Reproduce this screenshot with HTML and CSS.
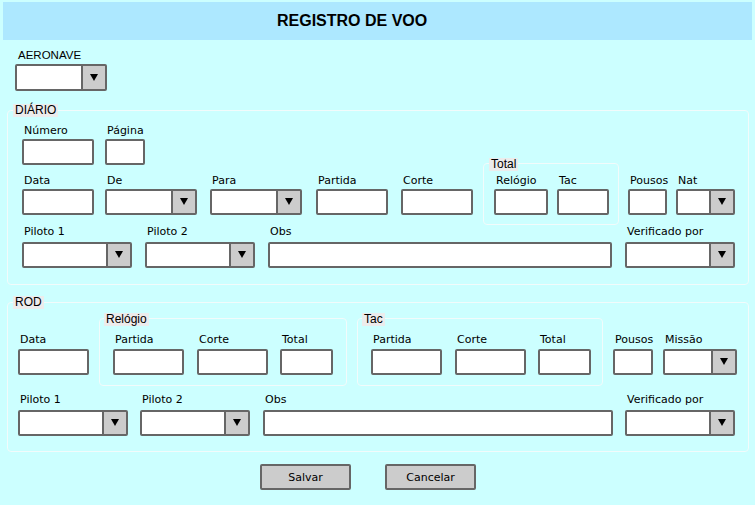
FILE: index.html
```html
<!DOCTYPE html>
<html lang="pt">
<head>
<meta charset="utf-8">
<title>Registro de Voo</title>
<link rel="stylesheet" href="styles.css">
</head>
<body>
<div class="hdr">REGISTRO DE VOO</div>

<div class="aero">
  <div class="fld w92">
    <span class="lb lb-caps">AERONAVE</span>
    <div class="sel tall"><span class="dd"></span></div>
  </div>
</div>

<section class="grp outer diario">
  <div class="lgd">DIÁRIO</div>
  <div class="row d1">
    <div class="fld w72"><span class="lb">Número</span><div class="inp"></div></div>
    <div class="fld w40 ml11"><span class="lb">Página</span><div class="inp"></div></div>
  </div>
  <div class="row d2">
    <div class="fld w72"><span class="lb">Data</span><div class="inp"></div></div>
    <div class="fld w92 ml11"><span class="lb">De</span><div class="sel"><span class="dd"></span></div></div>
    <div class="fld w92 ml13"><span class="lb">Para</span><div class="sel"><span class="dd"></span></div></div>
    <div class="fld w72 ml14"><span class="lb">Partida</span><div class="inp"></div></div>
    <div class="fld w72 ml13"><span class="lb">Corte</span><div class="inp"></div></div>
    <div class="grp inner total ml10">
      <div class="lgd">Total</div>
      <div class="row">
        <div class="fld w54"><span class="lb">Relógio</span><div class="inp"></div></div>
        <div class="fld w52 ml9"><span class="lb">Tac</span><div class="inp"></div></div>
      </div>
    </div>
    <div class="fld w39 ml9"><span class="lb">Pousos</span><div class="inp"></div></div>
    <div class="fld w59 ml9"><span class="lb">Nat</span><div class="sel"><span class="dd"></span></div></div>
  </div>
  <div class="row d3">
    <div class="fld w110"><span class="lb">Piloto 1</span><div class="sel"><span class="dd"></span></div></div>
    <div class="fld w110 ml13"><span class="lb">Piloto 2</span><div class="sel"><span class="dd"></span></div></div>
    <div class="fld w344 ml13"><span class="lb">Obs</span><div class="inp"></div></div>
    <div class="fld w110 ml13"><span class="lb">Verificado por</span><div class="sel"><span class="dd"></span></div></div>
  </div>
</section>

<section class="grp outer rod">
  <div class="lgd">ROD</div>
  <div class="row ra">
    <div class="fld w71"><span class="lb">Data</span><div class="inp"></div></div>
    <div class="grp inner clock ml10">
      <div class="lgd">Relógio</div>
      <div class="row">
        <div class="fld w71"><span class="lb">Partida</span><div class="inp"></div></div>
        <div class="fld w71 ml13"><span class="lb">Corte</span><div class="inp"></div></div>
        <div class="fld w53 ml12"><span class="lb">Total</span><div class="inp"></div></div>
      </div>
    </div>
    <div class="grp inner tac ml10">
      <div class="lgd">Tac</div>
      <div class="row">
        <div class="fld w71"><span class="lb">Partida</span><div class="inp"></div></div>
        <div class="fld w71 ml13"><span class="lb">Corte</span><div class="inp"></div></div>
        <div class="fld w53 ml12"><span class="lb">Total</span><div class="inp"></div></div>
      </div>
    </div>
    <div class="fld w40 ml10"><span class="lb">Pousos</span><div class="inp"></div></div>
    <div class="fld w74 ml10"><span class="lb">Missão</span><div class="sel"><span class="dd"></span></div></div>
  </div>
  <div class="row rb">
    <div class="fld w110"><span class="lb">Piloto 1</span><div class="sel"><span class="dd"></span></div></div>
    <div class="fld w110 ml12"><span class="lb">Piloto 2</span><div class="sel"><span class="dd"></span></div></div>
    <div class="fld w350 ml13"><span class="lb">Obs</span><div class="inp"></div></div>
    <div class="fld w110 ml12"><span class="lb">Verificado por</span><div class="sel"><span class="dd"></span></div></div>
  </div>
</section>

<div class="actions">
  <button class="act" type="button">Salvar</button>
  <button class="act" type="button">Cancelar</button>
</div>
</body>
</html>
```

FILE: styles.css
```css
html, body {
  margin: 0;
  background: #ccffff;
}
body {
  padding: 2px 0 0;
  width: 755px;
  height: 503px;
  overflow: hidden;
  font-family: "DejaVu Sans", sans-serif;
  font-size: 11px;
  color: #000;
}

.hdr {
  margin: 0 3px;
  height: 38px;
  line-height: 38px;
  background: #ade8ff;
  padding-left: 274px;
  font-family: "Liberation Sans", Arial, sans-serif;
  font-weight: bold;
  font-size: 16px;
  color: #000;
}

.aero {
  margin: 8px 0 0 15px;
}

/* fields */
.fld {
  display: flex;
  flex-direction: column;
  flex: none;
}
.lb {
  display: block;
  height: 14px;
  line-height: 14px;
  padding-left: 2px;
  white-space: nowrap;
  margin-bottom: 1px;
}
.lb-caps {
  font-family: "Liberation Sans", Arial, sans-serif;
  font-size: 11.5px;
  padding-left: 3px;
  margin-bottom: 2px;
}

.inp,
.sel {
  box-sizing: border-box;
  height: 26px;
  border: 2px solid #666;
  border-radius: 2px;
  background: #fff;
}
.sel {
  display: flex;
  justify-content: flex-end;
}
.sel.tall {
  height: 27px;
}
.dd {
  box-sizing: border-box;
  width: 24px;
  border-left: 2px solid #666;
  background: #ccc;
  display: flex;
  align-items: center;
  justify-content: center;
}
.dd::after {
  content: "";
  width: 0;
  height: 0;
  border-left: 4px solid transparent;
  border-right: 4px solid transparent;
  border-top: 7px solid #000;
  margin-bottom: 1px;
}

/* groups */
.grp {
  box-sizing: border-box;
  border: 1px solid #f2fbfb;
  border-radius: 4px;
  flex: none;
}
.lgd {
  width: fit-content;
  height: 13px;
  line-height: 13px;
  padding: 0 2px;
  background: #ececec;
  font-family: "Liberation Sans", Arial, sans-serif;
  font-size: 12px;
  margin-top: -7px;
}
.inner > .lgd {
  margin-top: -6px;
}

.row {
  display: flex;
  align-items: flex-start;
}

.outer {
  width: 742px;
  margin-left: 7px;
}

/* DIÁRIO */
.diario {
  margin-top: 19px;
  padding: 0 0 16px 14px;
}
.diario > .lgd {
  margin-left: -9px;
}
.d1 {
  margin-top: 7px;
}
.d2 {
  margin-top: 9px;
}
.d3 .lb {
  margin-bottom: 3px;
}
.total {
  margin-top: -11px;
  padding: 0 9px 9px 10px;
}
.total > .lgd {
  margin-left: -5px;
}
.total .row {
  margin-top: 3px;
}

/* ROD */
.rod {
  margin-top: 17px;
  padding: 0 0 15px 10px;
}
.rod > .lgd {
  margin-left: -5px;
}
.ra {
  margin-top: 24px;
}
.ra .lb {
  margin-bottom: 2px;
}
.clock,
.tac {
  margin-top: -15px;
  padding: 0 13px 10px 13px;
}
.tac {
  padding-right: 11px;
}
.clock > .lgd,
.tac > .lgd {
  margin-left: -9px;
}
.clock .row,
.tac .row {
  margin-top: 7px;
}
.rb {
  margin-top: 7px;
}
.rb .lb {
  margin-bottom: 3px;
}

/* actions */
.actions {
  display: flex;
  gap: 34px;
  margin-top: 12px;
  padding-left: 260px;
}
.act {
  box-sizing: border-box;
  width: 91px;
  height: 26px;
  padding: 0;
  border: 2px solid #666;
  border-radius: 2px;
  background: #ccc;
  font-family: "DejaVu Sans", sans-serif;
  font-size: 11px;
  color: #000;
}

/* widths */
.w39 { width: 39px; }
.w40 { width: 40px; }
.w52 { width: 52px; }
.w53 { width: 53px; }
.w54 { width: 54px; }
.w59 { width: 59px; }
.w71 { width: 71px; }
.w72 { width: 72px; }
.w74 { width: 74px; }
.w92 { width: 92px; }
.w110 { width: 110px; }
.w344 { width: 344px; }
.w350 { width: 350px; }

/* spacing */
.ml9 { margin-left: 9px; }
.ml10 { margin-left: 10px; }
.ml11 { margin-left: 11px; }
.ml12 { margin-left: 12px; }
.ml13 { margin-left: 13px; }
.ml14 { margin-left: 14px; }
```
